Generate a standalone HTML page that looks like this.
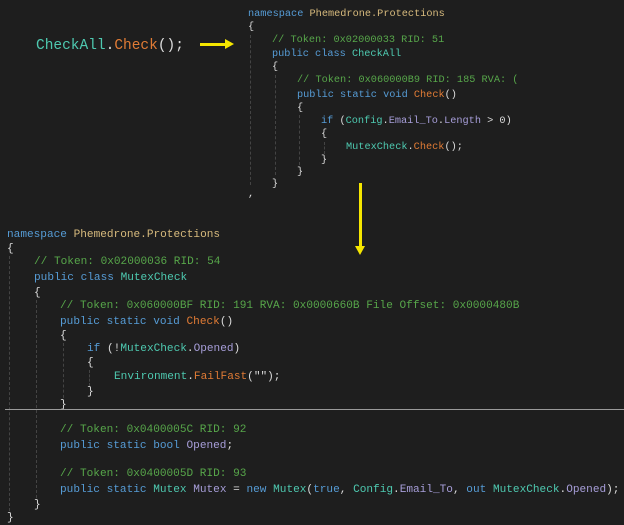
<!DOCTYPE html>
<html><head><meta charset="utf-8"><style>
body{margin:0;width:624px;height:524px;background:#1e1e1e;overflow:hidden;position:relative;font-family:"Liberation Mono",monospace;}
.l{position:absolute;white-space:pre;color:#dcdcdc;}
.t .l{font-size:10.25px;line-height:13px;}
.b .l{font-size:11.1px;line-height:14px;}
.k{color:#569cd6}.ty{color:#4ec9b0}.m{color:#e07b35}.n{color:#d7ba7d}.c{color:#57a64a}.p{color:#a79ed9}
.g{position:absolute;width:0;border-left:1px dashed #444;}
</style></head><body>
<div class="l" style="left:36px;top:36px;font-size:14.5px;line-height:20px;"><span class="ty">CheckAll</span>.<span class="m">Check</span>();</div>
<div style="position:absolute;left:200px;top:43px;width:26px;height:3px;background:#f5e600"></div>
<div style="position:absolute;left:225px;top:39px;width:0;height:0;border-left:9px solid #f5e600;border-top:5.5px solid transparent;border-bottom:5.5px solid transparent"></div>
<div style="position:absolute;left:359px;top:183px;width:3px;height:64px;background:#f5e600"></div>
<div style="position:absolute;left:355px;top:246px;width:0;height:0;border-top:9px solid #f5e600;border-left:5.5px solid transparent;border-right:5.5px solid transparent"></div>

<div class="t">
<div class="g" style="left:250px;top:35px;height:150px"></div>
<div class="g" style="left:275px;top:75px;height:100px"></div>
<div class="g" style="left:299px;top:115px;height:50px"></div>
<div class="g" style="left:324px;top:142px;height:12px"></div>
<div class="l" style="left:248px;top:8px"><span class="k">namespace</span> <span class="n">Phemedrone.Protections</span></div>
<div class="l" style="left:248px;top:21px">{</div>
<div class="l" style="left:272px;top:34px"><span class="c">// Token: 0x02000033 RID: 51</span></div>
<div class="l" style="left:272px;top:48px"><span class="k">public class</span> <span class="ty">CheckAll</span></div>
<div class="l" style="left:272px;top:61px">{</div>
<div class="l" style="left:297px;top:74px"><span class="c">// Token: 0x060000B9 RID: 185 RVA: (</span></div>
<div class="l" style="left:297px;top:89px"><span class="k">public static void</span> <span class="m">Check</span>()</div>
<div class="l" style="left:297px;top:102px">{</div>
<div class="l" style="left:321px;top:115px"><span class="k">if</span> (<span class="ty">Config</span>.<span class="p">Email_To</span>.<span class="p">Length</span> &gt; 0)</div>
<div class="l" style="left:321px;top:128px">{</div>
<div class="l" style="left:346px;top:141px"><span class="ty">MutexCheck</span>.<span class="m">Check</span>();</div>
<div class="l" style="left:321px;top:154px">}</div>
<div class="l" style="left:297px;top:166px">}</div>
<div class="l" style="left:272px;top:178px">}</div>
<div class="l" style="left:248px;top:188px">,</div>
</div>

<div class="b">
<div class="g" style="left:9px;top:256px;height:255px"></div>
<div class="g" style="left:36px;top:300px;height:198px"></div>
<div class="g" style="left:63px;top:343px;height:60px"></div>
<div class="g" style="left:89px;top:370px;height:16px"></div>
<div class="l" style="left:7px;top:228px"><span class="k">namespace</span> <span class="n">Phemedrone.Protections</span></div>
<div class="l" style="left:7px;top:242px">{</div>
<div class="l" style="left:34px;top:255px"><span class="c">// Token: 0x02000036 RID: 54</span></div>
<div class="l" style="left:34px;top:271px"><span class="k">public class</span> <span class="ty">MutexCheck</span></div>
<div class="l" style="left:34px;top:286px">{</div>
<div class="l" style="left:60px;top:299px"><span class="c">// Token: 0x060000BF RID: 191 RVA: 0x0000660B File Offset: 0x0000480B</span></div>
<div class="l" style="left:60px;top:315px"><span class="k">public static void</span> <span class="m">Check</span>()</div>
<div class="l" style="left:60px;top:329px">{</div>
<div class="l" style="left:87px;top:342px"><span class="k">if</span> (!<span class="ty">MutexCheck</span>.<span class="p">Opened</span>)</div>
<div class="l" style="left:87px;top:356px">{</div>
<div class="l" style="left:114px;top:370px"><span class="ty">Environment</span>.<span class="m">FailFast</span>("");</div>
<div class="l" style="left:87px;top:385px">}</div>
<div class="l" style="left:60px;top:398px">}</div>
<div style="position:absolute;left:5px;top:409px;width:619px;height:1px;background:#9a9a9a"></div>
<div class="l" style="left:60px;top:423px"><span class="c">// Token: 0x0400005C RID: 92</span></div>
<div class="l" style="left:60px;top:439px"><span class="k">public static bool</span> <span class="p">Opened</span>;</div>
<div class="l" style="left:60px;top:467px"><span class="c">// Token: 0x0400005D RID: 93</span></div>
<div class="l" style="left:60px;top:483px"><span class="k">public static</span> <span class="ty">Mutex</span> <span class="p">Mutex</span> = <span class="k">new</span> <span class="ty">Mutex</span>(<span class="k">true</span>, <span class="ty">Config</span>.<span class="p">Email_To</span>, <span class="k">out</span> <span class="ty">MutexCheck</span>.<span class="p">Opened</span>);</div>
<div class="l" style="left:34px;top:498px">}</div>
<div class="l" style="left:7px;top:511px">}</div>
</div>
</body></html>
